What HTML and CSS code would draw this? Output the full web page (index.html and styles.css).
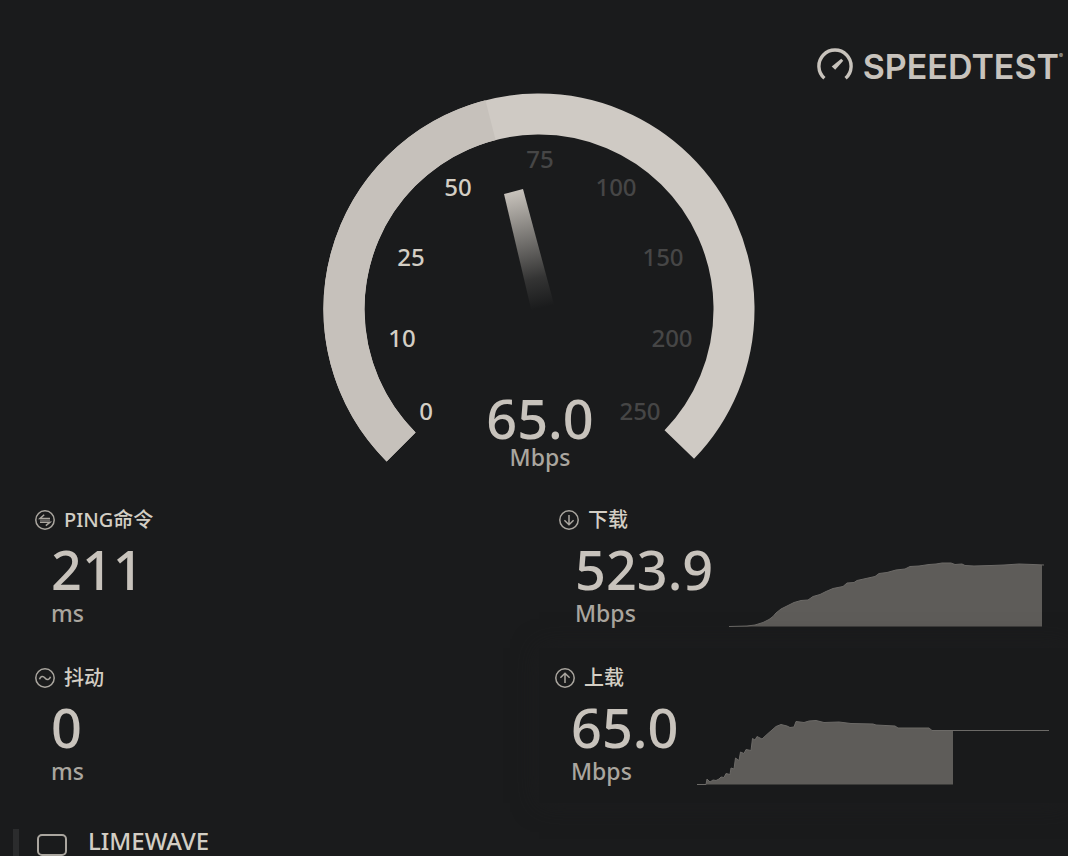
FILE: index.html
```
<!DOCTYPE html>
<html lang="zh-CN">
<head>
  <meta charset="UTF-8" />
  <meta name="viewport" content="width=device-width, initial-scale=1.0" />
  <title>Speedtest</title>
  <link rel="stylesheet" href="styles.css">
</head>
<body>

  <header>
    <a class="logo" href="#">
      <svg class="logo-icon" viewBox="0 0 34 34" aria-hidden="true">
        <path d="M7 28.6A15.2 15.2 0 1 1 27 28.6" fill="none" stroke="currentColor" stroke-width="3.2" />
        <path d="M22.9 10.2L24.8 12.1L17.2 20.6L13.9 17.4Z" fill="currentColor" />
      </svg>
      <span>SPEEDTEST</span><sup>®</sup>
    </a>
  </header>

  <main>
    <section class="gauge">
      <svg viewBox="0 0 440 400" role="img" aria-label="65.0 Mbps">
        <defs>
          <linearGradient id="needle" gradientUnits="userSpaceOnUse" x1="195" y1="101" x2="222" y2="218">
            <stop offset="0" stop-color="#c8c3bc" />
            <stop offset="0.35" stop-color="#c8c3bc" stop-opacity="0.6" />
            <stop offset="0.75" stop-color="#c8c3bc" stop-opacity="0.15" />
            <stop offset="1" stop-color="#c8c3bc" stop-opacity="0" />
          </linearGradient>
        </defs>
        <path class="arc" d="M82.1 356.9A195 195 0 1 1 360.3 354.5" />
        <path class="arc arc-done" d="M82.1 356.9A195 195 0 0 1 171.5 30.1" />
        <path d="M185 104L204 99L236 218L213 223Z" fill="url(#needle)" />
        <g class="ticks on">
          <text x="107" y="330">0</text>
          <text x="83" y="257">10</text>
          <text x="92" y="176">25</text>
          <text x="139" y="106">50</text>
        </g>
        <g class="ticks">
          <text x="221" y="78">75</text>
          <text x="297" y="106">100</text>
          <text x="344" y="176">150</text>
          <text x="353" y="257">200</text>
          <text x="321" y="330">250</text>
        </g>
        <text class="speed" x="221" y="349">65.0</text>
        <text class="speed-unit" x="221" y="376">Mbps</text>
      </svg>
    </section>

    <section class="results">
      <article class="card">
        <div class="info">
          <h2>
            <svg class="icon" viewBox="0 0 20 20" aria-hidden="true">
              <circle cx="10" cy="10" r="9.2" />
              <path d="M15 8.4H5L9.2 4.8M5 12.2H15L10.8 15.6" />
              <path d="M5 10.3H15" opacity="0.5" />
            </svg>
            PING命令
          </h2>
          <p class="value">211</p>
          <p class="unit">ms</p>
        </div>
      </article>

      <article class="card download">
        <div class="info">
          <h2>
            <svg class="icon" viewBox="0 0 20 20" aria-hidden="true">
              <circle cx="10" cy="10" r="9.2" />
              <path d="M10 5V14.6M5.4 10.2L10 14.8L14.6 10.2" />
            </svg>
            下载
          </h2>
          <p class="value">523.9</p>
          <p class="unit">Mbps</p>
        </div>
        <svg class="chart" viewBox="0 0 315 66" preserveAspectRatio="none" aria-hidden="true">
          <path class="area" d="M0 65.5L18 65L26 64L34 61.5L40 58.5L44 55.5L47 52L52 48L58 45L65 41.5L72 39.5L79 39L84 35.5L91 33.5L97 30.5L104 27.5L114 25.5L118 22L125 21.5L128 19.5L137 17.5L146 15.5L150 12.5L158 11.5L167 9L176 8L181 5.5L190 5L200 3.5L207 3L213 2L222 2L226 3.5L233 3L236 4.5L245 5L262 4.5L275 4L290 3L304 3.5L313 4V65.5Z" />
          <path class="line" d="M0 65.5L18 65L26 64L34 61.5L40 58.5L44 55.5L47 52L52 48L58 45L65 41.5L72 39.5L79 39L84 35.5L91 33.5L97 30.5L104 27.5L114 25.5L118 22L125 21.5L128 19.5L137 17.5L146 15.5L150 12.5L158 11.5L167 9L176 8L181 5.5L190 5L200 3.5L207 3L213 2L222 2L226 3.5L233 3L236 4.5L245 5L262 4.5L275 4L290 3L304 3.5L315 4" />
        </svg>
      </article>

      <article class="card">
        <div class="info">
          <h2>
            <svg class="icon" viewBox="0 0 20 20" aria-hidden="true">
              <circle cx="10" cy="10" r="9.2" />
              <path d="M4.5 11.2C5.5 8 8 7.5 10 10S14.5 12 15.5 8.8" />
            </svg>
            抖动
          </h2>
          <p class="value">0</p>
          <p class="unit">ms</p>
        </div>
      </article>

      <article class="card upload">
        <div class="info">
          <h2>
            <svg class="icon" viewBox="0 0 20 20" aria-hidden="true">
              <circle cx="10" cy="10" r="9.2" />
              <path d="M10 15V5.4M5.4 9.8L10 5.2L14.6 9.8" />
            </svg>
            上载
          </h2>
          <p class="value">65.0</p>
          <p class="unit">Mbps</p>
        </div>
        <svg class="chart" viewBox="0 0 352 66" preserveAspectRatio="none" aria-hidden="true">
          <path class="area" d="M0 65.5H9L10 60L13 63L16 61L19 61.5L22 60L24 58L27 58.5L29 54.5L33 55.5L34 49L37 50L38.5 39L42 41.5L43.5 33L47 34.5L49 30.5L54 31.5L55.5 19.5L58 21L60 17.5L65 20L71 14.5L79 7.5L84 5.5L90 7L93 8.5L97 8L99 2.5L107 3.5L112 2L119 1.5L127 3.5L142 3L154 4.5L176 5L179 6L198 7L201 9L232 9L235 11.5H256V65.5Z" />
          <path class="line" d="M0 65.5H9L10 60L13 63L16 61L19 61.5L22 60L24 58L27 58.5L29 54.5L33 55.5L34 49L37 50L38.5 39L42 41.5L43.5 33L47 34.5L49 30.5L54 31.5L55.5 19.5L58 21L60 17.5L65 20L71 14.5L79 7.5L84 5.5L90 7L93 8.5L97 8L99 2.5L107 3.5L112 2L119 1.5L127 3.5L142 3L154 4.5L176 5L179 6L198 7L201 9L232 9L235 11.5H352" />
        </svg>
      </article>
    </section>
  </main>

  <footer>
    <svg class="host-icon" viewBox="0 0 32 26" aria-hidden="true">
      <rect x="2" y="2" width="28" height="20" rx="4" />
    </svg>
    <span>LIMEWAVE</span>
  </footer>

</body>
</html>
```
FILE: styles.css
```
* {
  margin: 0;
  padding: 0;
  box-sizing: border-box;
}

html {
  overflow: hidden;
}

body {
  min-height: 100vh;
  background-color: #1a1b1c;
  color: #c8c3bc;
  font-family: 'Noto Sans', 'Noto Sans CJK SC', sans-serif;
  font-weight: 500;
}

header {
  display: flex;
  justify-content: flex-end;
  padding: 46px 5px 0 0;
}

.logo {
  display: flex;
  align-items: center;
  height: 40px;
  color: #c8c3bc;
  font-family: Inter, sans-serif;
  font-size: 34px;
  font-weight: 600;
  text-decoration: none;
}

.logo-icon {
  width: 36px;
  height: 36px;
  margin-right: 10px;
}

.logo sup {
  align-self: flex-start;
  font-size: 6px;
  line-height: 20px;
}

main {
  padding-left: 10px;
}

/* Gauge */
.gauge {
  display: flex;
  justify-content: center;
  padding-top: 4px;
}

.gauge svg {
  width: 440px;
  height: 400px;
}

.arc {
  fill: none;
  stroke: #cfcac4;
  stroke-width: 41;
}

.arc-done {
  stroke: #c6c1bb;
}

.gauge text {
  text-anchor: middle;
  fill: #c8c3bc;
}

.ticks text {
  font-size: 24px;
  fill: #464646;
}

.ticks.on text {
  fill: #d3cec4;
}

.gauge .speed {
  font-size: 54px;
}

.gauge .speed-unit {
  font-size: 23px;
  fill: #aaa69f;
}

/* Results */
.results {
  display: grid;
  grid-template-columns: 1fr 1fr;
  row-gap: 3px;
}

.card {
  display: flex;
  min-height: 155px;
  padding: 16px 24px 18px 25px;
}

.download {
  padding-left: 20px;
}

.upload {
  padding-left: 16px;
  padding-right: 19px;
  background-color: #191a1b;
  box-shadow: 0 0 24px rgba(30, 30, 31, 0.8);
}

.info {
  flex: none;
}

.download .info {
  width: 170px;
}

.upload .info {
  width: 142px;
}

.card h2 {
  display: flex;
  align-items: center;
  gap: 9px;
  height: 28px;
  color: #d3cec4;
  font-size: 20px;
  font-weight: 500;
  line-height: 28px;
}

.icon {
  width: 20px;
  height: 20px;
  fill: none;
  stroke: #aaa69f;
  stroke-width: 1.5;
}

.value {
  margin: 7px 0 2px 16px;
  font-size: 54px;
  line-height: 56px;
}

.unit {
  margin-left: 16px;
  color: #aaa69f;
  font-size: 23px;
  line-height: 28px;
}

.chart {
  flex: 1;
  min-width: 0;
  height: 66px;
  align-self: flex-end;
}

.area {
  fill: #5e5c59;
}

.line {
  fill: none;
  stroke: #6c6a67;
  stroke-width: 1;
}

/* Host */
footer {
  display: flex;
  align-items: flex-start;
  margin: 26px 0 0 13px;
  padding-left: 17px;
  border-left: 6px solid #2b2c2d;
  color: #d3cec4;
  font-size: 24px;
  line-height: 24px;
}

.host-icon {
  width: 32px;
  height: 26px;
  margin: 4px 20px 0 0;
  fill: none;
  stroke: #aaa69f;
  stroke-width: 2;
}
```
